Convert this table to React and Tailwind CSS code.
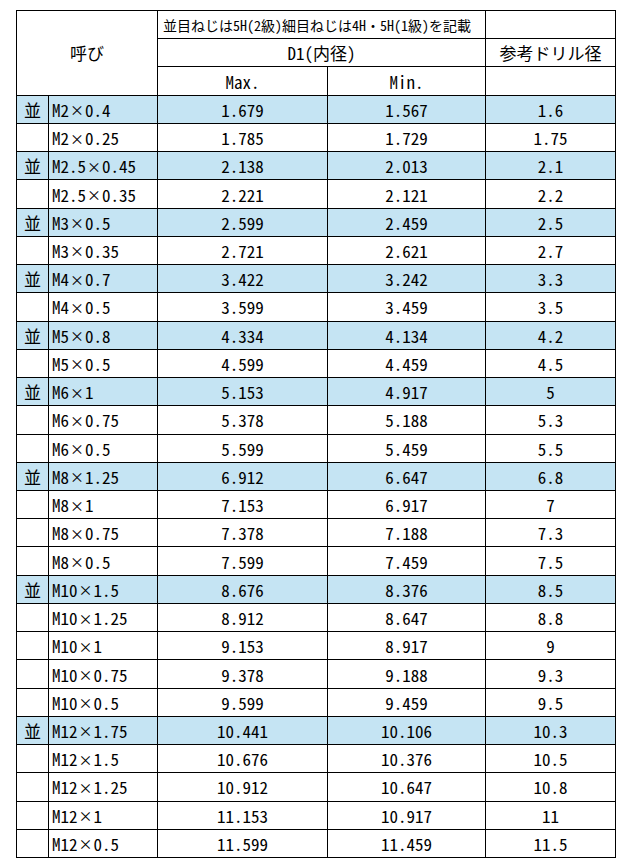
import React from 'react';

const rows = [
  [true, 'M2', '0.4', '1.679', '1.567', '1.6'],
  [false, 'M2', '0.25', '1.785', '1.729', '1.75'],
  [true, 'M2.5', '0.45', '2.138', '2.013', '2.1'],
  [false, 'M2.5', '0.35', '2.221', '2.121', '2.2'],
  [true, 'M3', '0.5', '2.599', '2.459', '2.5'],
  [false, 'M3', '0.35', '2.721', '2.621', '2.7'],
  [true, 'M4', '0.7', '3.422', '3.242', '3.3'],
  [false, 'M4', '0.5', '3.599', '3.459', '3.5'],
  [true, 'M5', '0.8', '4.334', '4.134', '4.2'],
  [false, 'M5', '0.5', '4.599', '4.459', '4.5'],
  [true, 'M6', '1', '5.153', '4.917', '5'],
  [false, 'M6', '0.75', '5.378', '5.188', '5.3'],
  [false, 'M6', '0.5', '5.599', '5.459', '5.5'],
  [true, 'M8', '1.25', '6.912', '6.647', '6.8'],
  [false, 'M8', '1', '7.153', '6.917', '7'],
  [false, 'M8', '0.75', '7.378', '7.188', '7.3'],
  [false, 'M8', '0.5', '7.599', '7.459', '7.5'],
  [true, 'M10', '1.5', '8.676', '8.376', '8.5'],
  [false, 'M10', '1.25', '8.912', '8.647', '8.8'],
  [false, 'M10', '1', '9.153', '8.917', '9'],
  [false, 'M10', '0.75', '9.378', '9.188', '9.3'],
  [false, 'M10', '0.5', '9.599', '9.459', '9.5'],
  [true, 'M12', '1.75', '10.441', '10.106', '10.3'],
  [false, 'M12', '1.5', '10.676', '10.376', '10.5'],
  [false, 'M12', '1.25', '10.912', '10.647', '10.8'],
  [false, 'M12', '1', '11.153', '10.917', '11'],
  [false, 'M12', '0.5', '11.599', '11.459', '11.5'],
];

const cell = 'border-r border-b border-black flex items-center';

export default function App() {
  return (
    <div className="bg-white w-[635px] h-[868px] pt-[10px] pl-[16px] text-black font-['Noto_Sans_Mono_CJK_JP','Noto_Sans_CJK_JP',monospace] text-[17px] leading-none">
      <div className="grid grid-cols-[32px_109px_170px_158px_130px] auto-rows-[28.24px] w-[600px] border-l border-t border-black">
        {/* header */}
        <div className={`${cell} col-span-2 row-span-3 justify-center`}>呼び</div>
        <div className={`${cell} col-span-2 pl-[5px] text-[14px]`}>並目ねじは5H(2級)細目ねじは4H・5H(1級)を記載</div>
        <div className={cell} />
        <div className={`${cell} col-span-2 justify-center`}>D1(内径)</div>
        <div className={`${cell} justify-center`}>参考ドリル径</div>
        <div className={`${cell} justify-center`}>Max.</div>
        <div className={`${cell} justify-center`}>Min.</div>
        <div className={cell} />

        {rows.map(([coarse, size, pitch, max, min, drill], i) => {
          const bg = coarse ? 'bg-[#c5e4f3]' : '';
          return (
            <React.Fragment key={i}>
              <div className={`${cell} ${bg} justify-center`}>{coarse ? '並' : ''}</div>
              <div className={`${cell} ${bg} pl-[3px]`}>
                {size}
                <span className="text-[14px] px-[1px]">×</span>
                {pitch}
              </div>
              <div className={`${cell} ${bg} justify-center`}>{max}</div>
              <div className={`${cell} ${bg} justify-center`}>{min}</div>
              <div className={`${cell} ${bg} justify-center`}>{drill}</div>
            </React.Fragment>
          );
        })}
      </div>
    </div>
  );
}
